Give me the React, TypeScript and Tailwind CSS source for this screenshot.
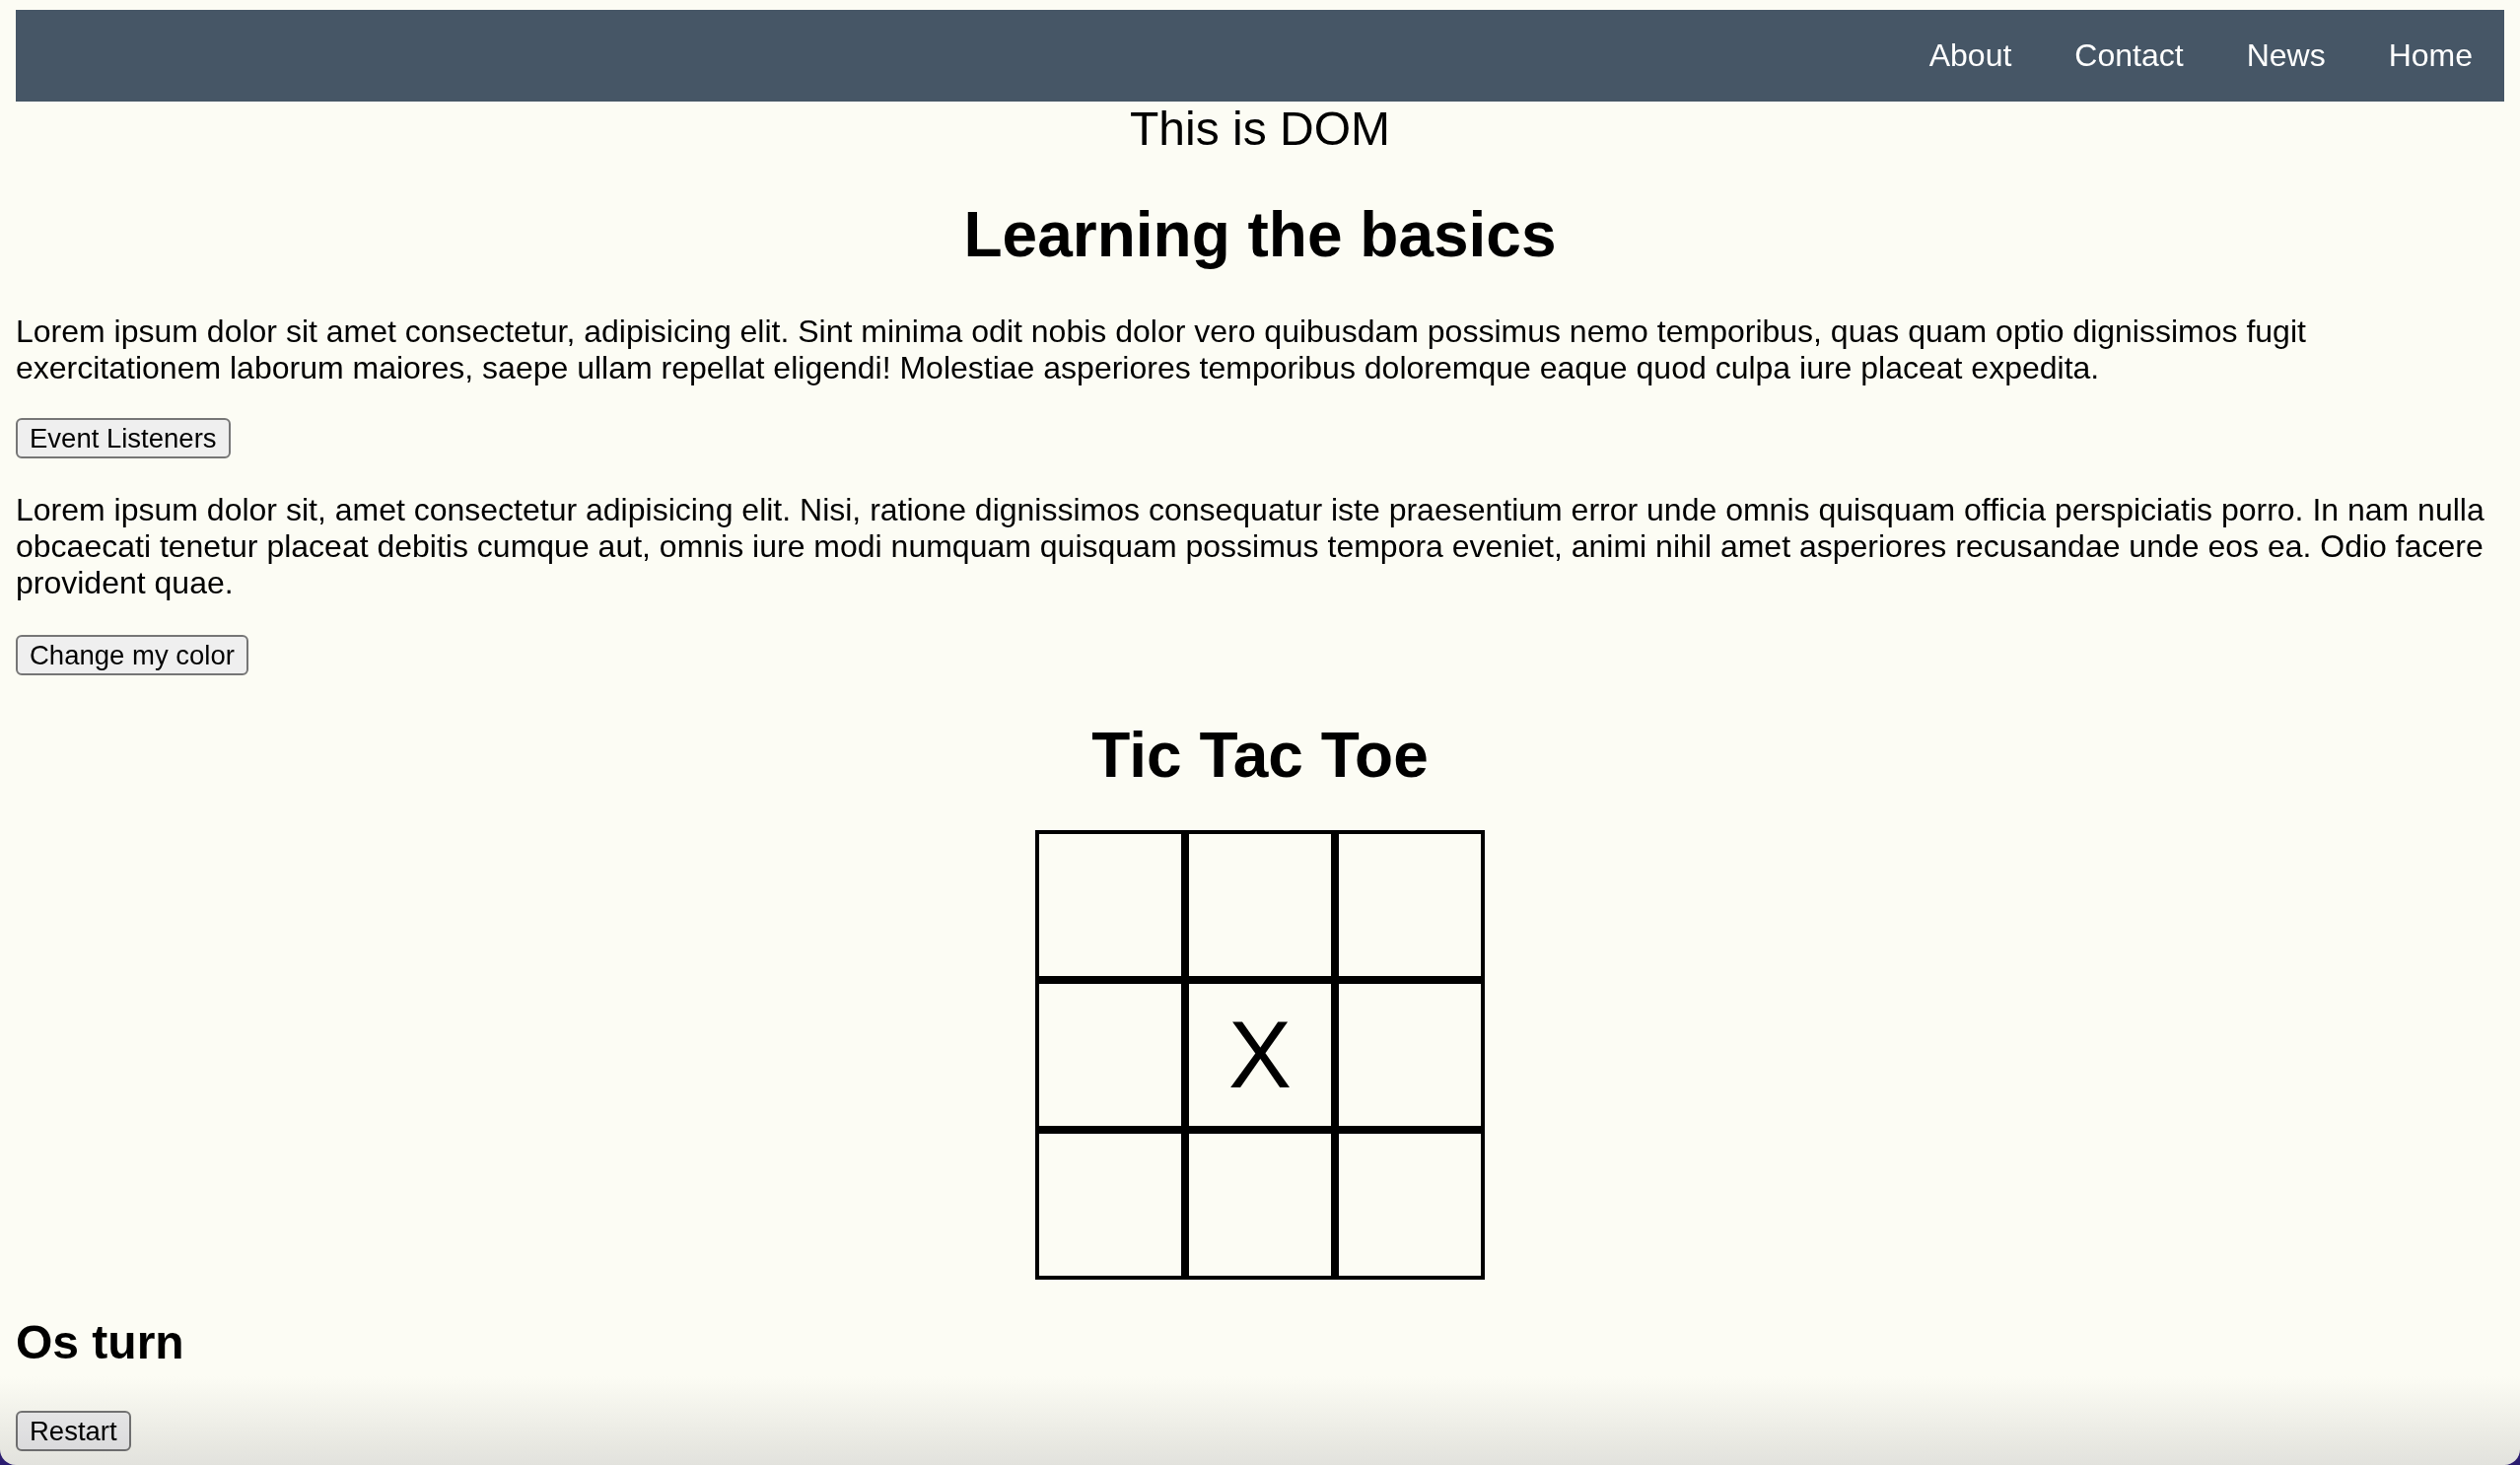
import React from "react";

const links = ["About", "Contact", "News", "Home"];

function Btn({ children }: { children: React.ReactNode }) {
  return (
    <button className="block h-[41px] px-[12px] border-2 border-[#767676] rounded-[6px] bg-[#efefef] text-[27.5px] leading-[31px] text-black font-['Liberation_Sans',Arial,sans-serif]">
      {children}
    </button>
  );
}

export default function App() {
  const cells = ["", "", "", "", "X", "", "", "", ""];
  return (
    <div className="h-screen w-full bg-[#2b1d70]">
      <div className="relative h-full w-full overflow-hidden rounded-b-[16px] bg-[#fcfcf4] px-[16px] pt-[10px] text-black font-['Liberation_Sans',Arial,sans-serif]">
        <nav className="flex h-[93px] items-center justify-end bg-[#465666]">
          {links.map((l) => (
            <a key={l} className="px-[32px] text-[32px] leading-[37px] text-white">
              {l}
            </a>
          ))}
        </nav>
        <div className="text-center text-[48px] leading-[55px]">This is DOM</div>
        <h1 className="mt-[43px] text-center text-[64px] font-bold leading-[74px]">Learning the basics</h1>
        <p className="mt-[43px] text-[32px] leading-[37px]">
          Lorem ipsum dolor sit amet consectetur, adipisicing elit. Sint minima odit nobis dolor vero quibusdam possimus nemo temporibus, quas quam optio dignissimos fugit exercitationem laborum maiores, saepe ullam repellat eligendi! Molestiae asperiores temporibus doloremque eaque quod culpa iure placeat expedita.
        </p>
        <div className="mt-[32px]">
          <Btn>Event Listeners</Btn>
        </div>
        <p className="mt-[34px] text-[32px] leading-[37px]">
          Lorem ipsum dolor sit, amet consectetur adipisicing elit. Nisi, ratione dignissimos consequatur iste praesentium error unde omnis quisquam officia perspiciatis porro. In nam nulla obcaecati tenetur placeat debitis cumque aut, omnis iure modi numquam quisquam possimus tempora eveniet, animi nihil amet asperiores recusandae unde eos ea. Odio facere provident quae.
        </p>
        <div className="mt-[34px]">
          <Btn>Change my color</Btn>
        </div>
        <h1 className="mt-[44px] text-center text-[64px] font-bold leading-[74px]">Tic Tac Toe</h1>
        <div className="mx-auto mt-[39px] grid w-[456px] grid-cols-3">
          {cells.map((c, i) => (
            <div
              key={i}
              className="flex h-[152px] items-center justify-center border-[4px] border-black text-[96px] leading-none"
            >
              {c}
            </div>
          ))}
        </div>
        <h2 className="mt-[36px] text-[48px] font-bold leading-[55px]">Os turn</h2>
        <div className="mt-[42px]">
          <Btn>Restart</Btn>
        </div>
        <div className="pointer-events-none absolute inset-x-0 bottom-0 h-[90px] bg-gradient-to-b from-white to-[#e5e5e7] mix-blend-multiply" />
      </div>
    </div>
  );
}
